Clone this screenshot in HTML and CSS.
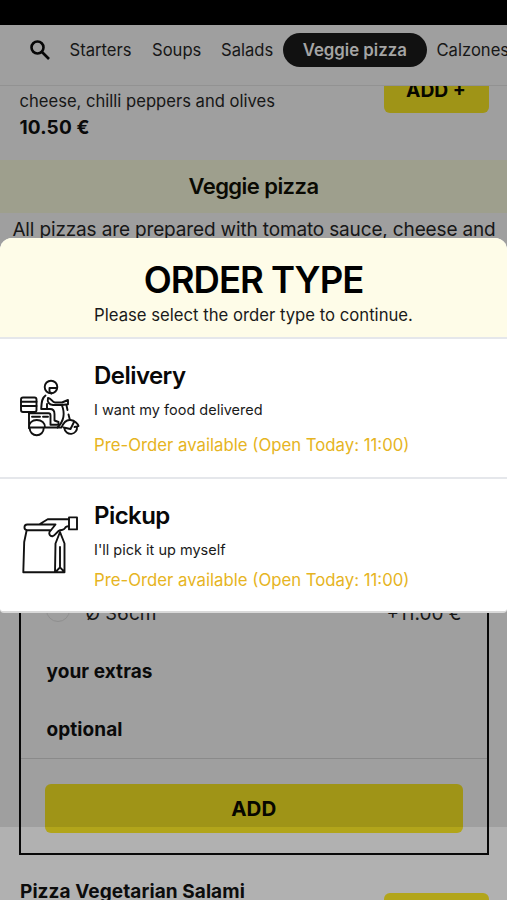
FILE: index.html
```html
<!DOCTYPE html>
<html lang="en">
<head>
<meta charset="utf-8">
<meta name="viewport" content="width=device-width, initial-scale=1">
<title>Order type</title>
<link rel="stylesheet" href="styles.css">
</head>
<body>
<div class="screen">
  <div class="status-bar"></div>
  <nav class="menu-nav">
    <svg class="search" viewBox="0 0 20 20" aria-hidden="true"><circle cx="7.5" cy="7.500" r="6"/><path d="M12 12l7 7"/></svg>
    <a class="nav-starters">Starters</a>
    <a class="nav-soups">Soups</a>
    <a class="nav-salads">Salads</a>
    <a class="active"><span>Veggie pizza</span></a>
    <a class="nav-calzones">Calzones</a>
  </nav>
  <main>
    <section class="dish">
      <div class="dish-info">
        <p class="ingredients">cheese, chilli peppers and olives</p>
        <p class="price">10.50 €</p>
      </div>
      <div class="add-clip"><button class="add-small">ADD +</button></div>
    </section>
    <h2 class="category"><span>Veggie pizza</span></h2>
    <p class="note"><span>All pizzas are prepared with tomato sauce, cheese and</span></p>
    <section class="options">
      <div class="size-row">
        <span class="radio"></span>
        <span class="size">Ø 36cm</span>
        <span class="size-price">+11.00 €</span>
      </div>
      <h3 class="extras">your extras</h3>
      <h3 class="optional">optional</h3>
      <div class="options-foot"><button class="add-wide">ADD</button></div>
    </section>
    <section class="next-dish">
      <h3>Pizza Vegetarian Salami</h3>
      <button class="add-small" aria-label="Add"></button>
    </section>
  </main>
  <div class="shade"></div>
  <div class="modal" role="dialog">
    <header class="modal-head">
      <h1><span>ORDER TYPE</span></h1>
      <p><span>Please select the order type to continue.</span></p>
    </header>
    <div class="choice delivery">
      <svg class="scooter" viewBox="0 0 80 75" aria-hidden="true">
        <rect x="11" y="27.500" width="15.500" height="14.500" rx="2"/>
        <path d="M11 31.800h15.500M11 36h15.500"/>
        <circle cx="41" cy="17" r="6.300"/>
        <path d="M47 18h-7.500v3.500l2 2"/>
        <path d="M35.500 25.500c-3 2-4 5-4.300 13.500h8.800c3.200 0 4.500 2 4.500 5v6.500l4 1.500v2.700h-8V45.500c0-1.500-.7-2.300-2-2.300H19"/>
        <path d="M38 28c3-.5 4 4.500 7 4.500h7l6-2.500v4.200l-6 .8H43c-4-.5-6-3-5-7zM37 34v4.500"/>
        <path d="M51.800 35c3.500 8.500 2.200 16-4.300 22.500M56.500 35.500l1 4.500M58.500 44.500l1.300 5"/>
        <path d="M19 43.200v15M22 46.800h8M33 46.800h5M19 57.500c0-5 3.500-7.500 7.700-7.500 5 0 8.300 3 8.300 7.500M19 57.500h32.500c2-5 5-8 9-7.500 4.500.5 7.500 4 8 6l-4 1"/>
        <path d="M19.700 58.300a7 7 0 0 0 14 0M54.400 58.300a6.300 6.300 0 0 0 12.600-1.500M53.500 57.500l7 1.500 3.500-7"/>
      </svg>
      <div class="choice-text">
        <h2>Delivery</h2>
        <p class="desc">I want my food delivered</p>
        <p class="preorder">Pre-Order available (Open Today: 11:00)</p>
      </div>
    </div>
    <div class="choice pickup">
      <svg class="bag" viewBox="0 0 80 80" aria-hidden="true">
        <path d="M41 25.200H17.300a2.850 2.850 0 0 1 0-5.700H45.500L39.500 27c-.8 2 .5 4.500 3 4.200 3-.5 4.500-5 7.500-6 3-.5 4 0 5-2 .5-1.500 1.500-2 3.500-2M29.500 19.300l8.200-5h21"/>
        <rect x="59" y="12.400" width="8" height="12"/>
        <path d="M16.500 26l-2.300 11-.9 30.300H54.500V38.500L50 27l-4.500 11.500-.5 28.500M50 42v20M45.500 67l4.500-4.700 4.500 4.700"/>
      </svg>
      <div class="choice-text">
        <h2>Pickup</h2>
        <p class="desc">I'll pick it up myself</p>
        <p class="preorder">Pre-Order available (Open Today: 11:00)</p>
      </div>
    </div>
  </div>
</div>
</body>
</html>
```

FILE: styles.css
```css
* { box-sizing: border-box; }
body { margin: 0; background: #b1b1b1; font-family: Inter, "Liberation Sans", sans-serif; color: #1a1a1a; }
h1, h2, h3, p { margin: 0; white-space: nowrap; }
button { font: inherit; border: 0; padding: 0; color: #080800; background: #b2a51a; display: block; }
.screen { position: relative; height: 900px; overflow: hidden; }
.status-bar { height: 25px; background: #000; }

.menu-nav { height: 61px; border-bottom: 1px solid #a3a3a3; padding: 8px 0 0 30px; display: flex; align-items: flex-start; font-size: 16.600px; line-height: 34px; white-space: nowrap; }
.search { width: 20px; height: 20px; margin: 7px 19.500px 0 0; flex: none; fill: none; stroke: #080808; stroke-width: 2.600; }
.menu-nav a { flex: none; }
.nav-starters { width: 82.500px; }
.nav-soups { width: 69px; }
.nav-salads { width: 62px; }
.menu-nav .active { width: 143.500px; text-align: center; background: #141414; color: #b8b8b8; border-radius: 17px; font-weight: 600; font-size: 16.800px; margin-right: 10px; }

.dish { height: 74px; display: flex; justify-content: space-between; padding: 0 18.500px 0 19.500px; }
.ingredients { font-size: 16.600px; line-height: 20px; padding-top: 5px; }
.price { font-size: 19px; letter-spacing: .15px; line-height: 24px; padding-top: 5px; font-weight: 700; color: #0c0c0c; }
.add-clip { height: 27px; overflow: hidden; display: flex; align-items: flex-end; }
.add-small { flex: none; width: 105px; height: 47px; border-radius: 6px; font-weight: 700; font-size: 19.300px; }
.category { height: 53px; line-height: 53px; background: #b0b19d; text-align: center; font-size: 22px; letter-spacing: -.55px; font-weight: 600; color: #0c0c04; }
.note { height: 390px; padding: 4px 0 0 1px; line-height: 26px; font-size: 19px; letter-spacing: -.15px; text-align: center; }

.options { margin: 0 18.500px 0 19px; height: 252px; border: 2px solid #080808; border-top: 0; }
.size-row { height: 23px; display: flex; padding: 0 25px; line-height: 21px; font-size: 19px; }
.radio { width: 24px; height: 24px; border: 1.500px solid #a0a0a0; border-radius: 50%; margin-right: 15.500px; flex: none; margin-top: -5px; }
.size-price { margin-left: auto; }
.extras, .optional { font-size: 19px; font-weight: 700; letter-spacing: .08px; color: #0c0c0c; padding-left: 25.500px; line-height: 24px; }
.extras { margin-top: 34px; }
.optional { margin-top: 34px; }
.options-foot { margin-top: 16px; border-top: 1px solid #9a9a9a; padding: 25px 24px 0; }
.add-wide { width: 100%; height: 49px; border-radius: 6px; font-weight: 700; font-size: 20.500px; }
.next-dish { display: flex; justify-content: space-between; padding: 24px 18.500px 0 20px; font-size: 16px; }
.next-dish h3 { font-size: 19px; letter-spacing: .08px; line-height: 25px; font-weight: 700; color: #0c0c0c; }
.next-dish .add-small { margin-top: 14px; }

.shade { position: absolute; inset: 25px 0 73px; background: rgba(0, 0, 0, .1); }
.modal { position: absolute; left: 0; right: 0; top: 238px; height: 375px; background: #fff; border-bottom: 2px solid #d9d9d9; border-radius: 12px 12px 4px 4px; overflow: hidden; }
.modal-head { height: 101px; background: #fefce8; border-bottom: 2px solid #e5e7eb; text-align: center; }
.modal-head h1 { font-size: 36.500px; letter-spacing: -1px; line-height: 44px; font-weight: 600; color: #000; padding-top: 20px; }
.modal-head p { font-size: 16.700px; line-height: 24px; padding-top: 1px; }
.choice { display: flex; }
.delivery { height: 140px; border-bottom: 2px solid #e5e7eb; }
.choice svg { flex: none; fill: none; stroke: #111; stroke-width: 1.900; stroke-linejoin: round; stroke-linecap: round; }
.scooter { width: 80px; height: 75px; margin: 31px 4px 0 10px; }
.bag { width: 80px; height: 80px; margin: 26px 4px 0 10px; }
.choice h2 { font-size: 24px; letter-spacing: -.55px; line-height: 30px; font-weight: 600; color: #080808; padding-top: 22px; }
.desc { font-size: 14.500px; line-height: 20px; padding-top: 9px; }
.preorder { font-size: 16.750px; line-height: 22px; color: #e6b422; padding-top: 14px; }
.pickup .preorder { padding-top: 9px; }
```
